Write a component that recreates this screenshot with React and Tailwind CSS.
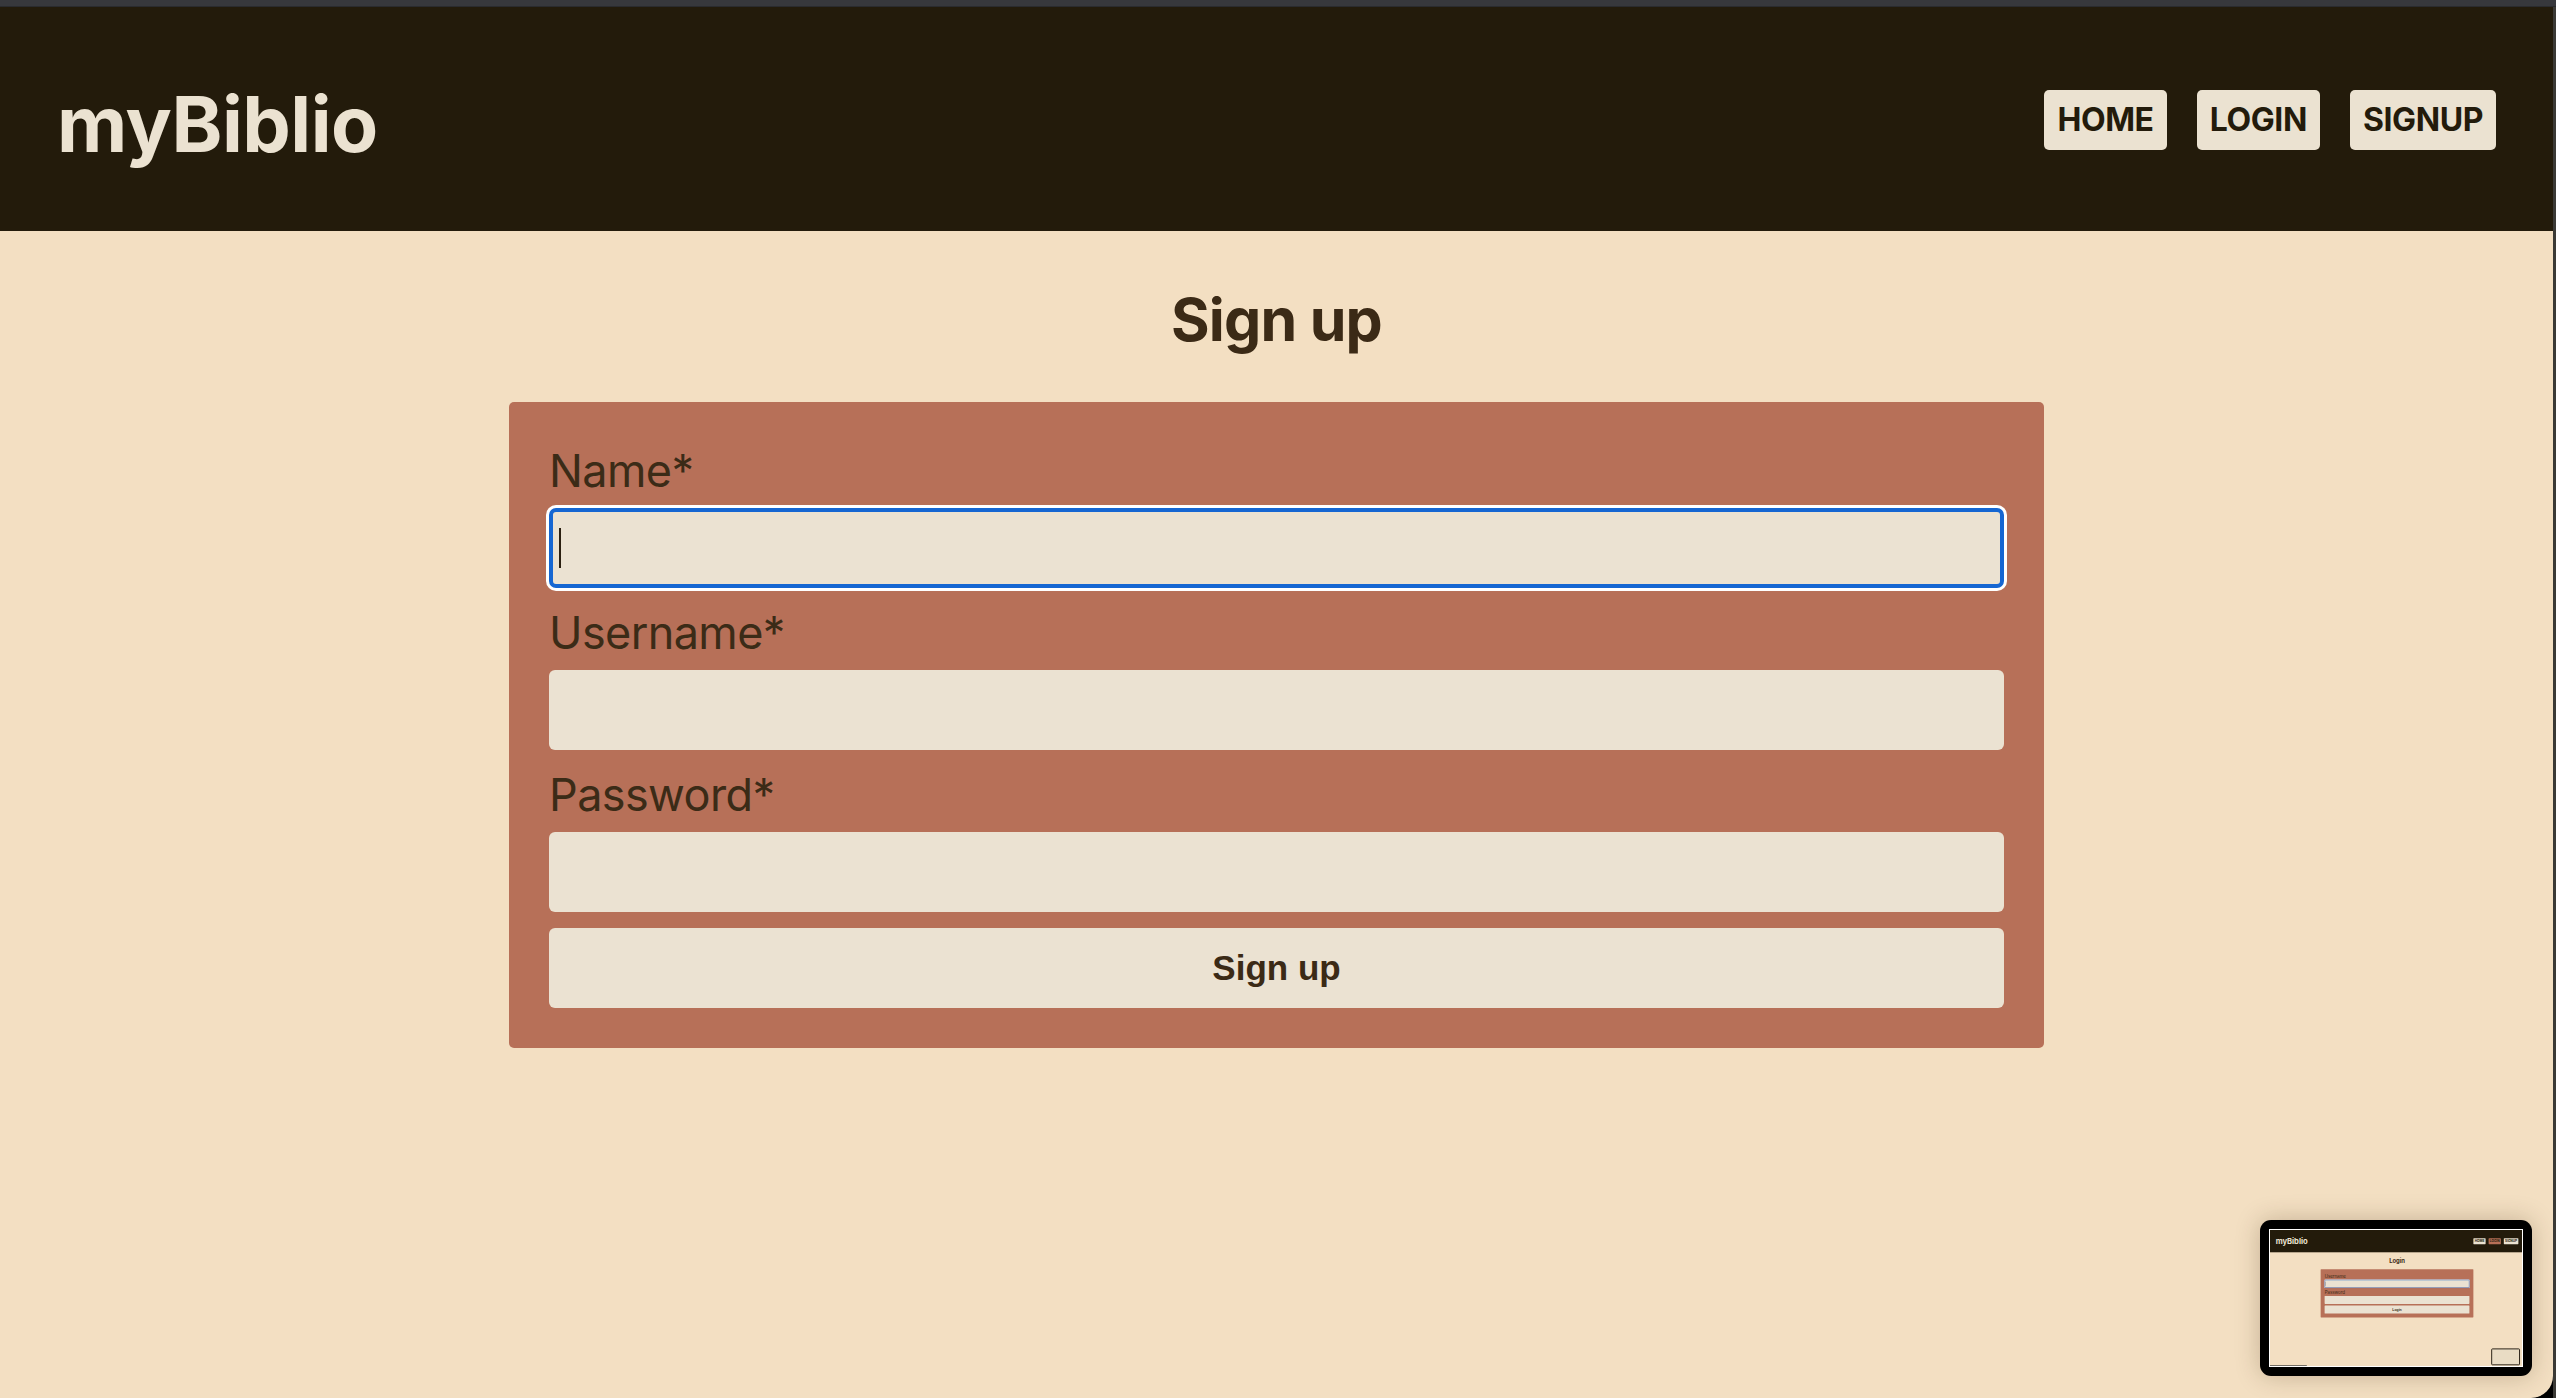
import { useState } from 'react';

const NAV = ['HOME', 'LOGIN', 'SIGNUP'];

function Header({ active }) {
  return (
    <header className="flex h-[224px] shrink-0 items-center justify-between bg-[#231b0b] px-[57px]">
      <h1 className="pt-[10px] text-[77px] leading-none font-bold tracking-[-0.5px] text-[#ebe2d1]">myBiblio</h1>
      <nav className="flex gap-[30px]">
        {NAV.map((item) => (
          <a
            key={item}
            href="#"
            className={
              item === active
                ? 'mt-[2px] h-[60px] rounded-[5px] bg-[#b77058] px-[13px] text-[32px] leading-[60px] font-bold tracking-[-0.4px] text-[#231b0b]'
                : 'mt-[2px] h-[60px] rounded-[5px] bg-[#ebe2d1] px-[13px] text-[32px] leading-[60px] font-bold tracking-[-0.4px] text-[#231b0b]'
            }
          >
            {item}
          </a>
        ))}
      </nav>
    </header>
  );
}

function Field({ label, type = 'text', focused, value, onChange }) {
  return (
    <div>
      <label className="block text-[45px] leading-[58px] tracking-[-0.6px] text-[#3b2b17]">{label}</label>
      <div className="relative mt-[8px]">
        <input
          type={type}
          value={value}
          onChange={onChange}
          className={
            focused
              ? 'block h-[80px] w-full rounded-[7px] border-[4px] border-[#1566d2] bg-[#ebe2d2] px-[8px] text-[32px] text-[#3b2b17] shadow-[0_0_0_3px_#ffffff] outline-none'
              : 'block h-[80px] w-full rounded-[6px] bg-[#ebe2d2] px-[12px] text-[32px] text-[#3b2b17] outline-none'
          }
        />
        {focused && <span className="absolute top-[20px] left-[10px] h-[40px] w-[2px] bg-[#2a1f10]" />}
      </div>
    </div>
  );
}

function FormPage({ title, fields, submit, values, setValue }) {
  return (
    <main className="flex flex-col items-center">
      <h2 className="mt-[53px] mb-[46px] text-[59px] leading-[72px] font-bold tracking-[-0.8px] text-[#3b2a16]">{title}</h2>
      <form
        className="flex w-[1535px] flex-col gap-[16px] rounded-[5px] bg-[#b77058] p-[40px]"
        onSubmit={(e) => e.preventDefault()}
      >
        {fields.map((f, i) => (
          <Field
            key={f.name}
            label={f.label}
            type={f.type}
            focused={i === 0}
            value={values ? values[f.name] : ''}
            onChange={(e) => setValue && setValue(f.name, e.target.value)}
          />
        ))}
        <button
          type="submit"
          className="h-[80px] w-full rounded-[6px] bg-[#ebe2d2] text-[35px] font-bold text-[#3b2a16] font-['Liberation_Sans',Arial,sans-serif]"
        >
          {submit}
        </button>
      </form>
    </main>
  );
}

function Thumbnail() {
  return (
    <div className="absolute right-[21px] bottom-[22px] rounded-[11px] bg-black p-[9px] shadow-[0_0_24px_rgba(60,40,10,0.25)]">
      <div className="relative h-[138px] w-[254px] overflow-hidden border border-white bg-[#f3dfc2]">
        <div className="relative h-[1390px] w-[2553px] origin-top-left scale-[0.0995] bg-[#f3dfc2]">
          <Header active="LOGIN" />
          <FormPage
            title="Login"
            submit="Login"
            fields={[
              { name: 'username', label: 'Username' },
              { name: 'password', label: 'Password', type: 'password' },
            ]}
          />
          <div className="absolute right-[40px] bottom-[30px] h-[170px] w-[290px] rounded-[12px] border-[10px] border-[#2b2418] bg-[#e9dcc4]" />
          <div className="absolute bottom-0 left-0 h-[30px] w-[370px] bg-[#3a3a3a]" />
        </div>
      </div>
    </div>
  );
}

export default function App() {
  const [form, setForm] = useState({ name: '', username: '', password: '' });
  const setValue = (name, value) => setForm((prev) => ({ ...prev, [name]: value }));

  return (
    <div className="flex h-[1398px] w-full flex-col bg-black font-['Inter','Noto_Sans',sans-serif]">
      <div className="h-[7px] shrink-0 border-b border-[#2a2b2e] bg-[#37383c]" />
      <div className="flex min-h-0 flex-1">
        <div className="relative flex flex-1 flex-col overflow-hidden rounded-br-[22px] bg-[#f3dfc2]">
          <Header />
          <FormPage
            title="Sign up"
            submit="Sign up"
            values={form}
            setValue={setValue}
            fields={[
              { name: 'name', label: 'Name*' },
              { name: 'username', label: 'Username*' },
              { name: 'password', label: 'Password*', type: 'password' },
            ]}
          />
          <Thumbnail />
        </div>
        <div className="w-[3px] shrink-0 bg-[#3b3a36]" />
      </div>
    </div>
  );
}
